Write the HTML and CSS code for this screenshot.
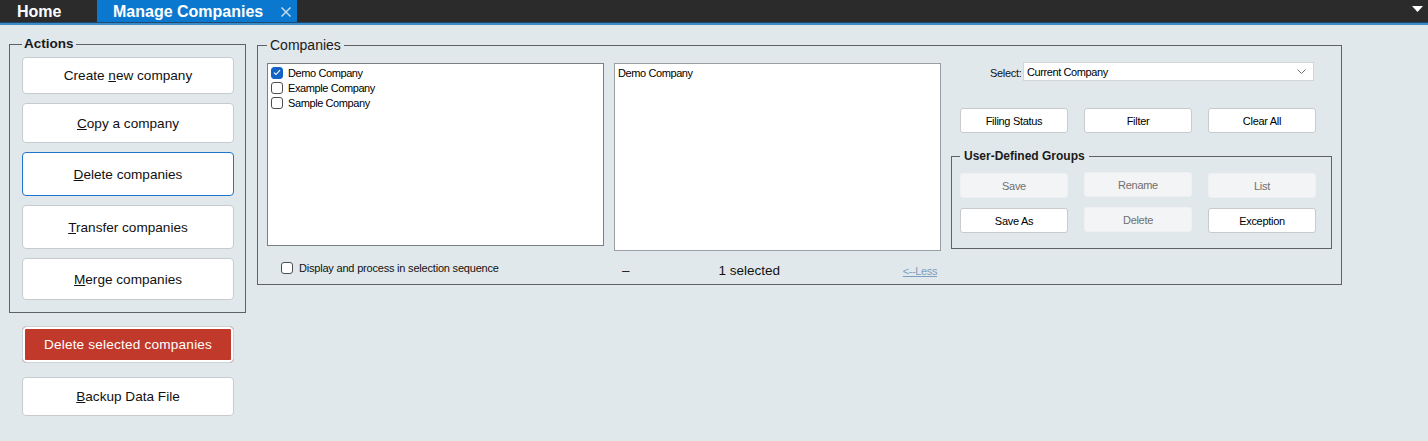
FILE: index.html
```html
<!DOCTYPE html>
<html lang="en">
<head>
<meta charset="utf-8">
<title>Manage Companies</title>
<link rel="stylesheet" href="styles.css">
</head>
<body>
<header class="tabbar">
  <div class="tab tab-home">Home</div>
  <div class="tab tab-active">Manage Companies
    <svg class="tab-close" width="12" height="12" viewBox="0 0 12 12"><path d="M1.5 1.5L10.5 10.5M10.5 1.5L1.5 10.5" stroke="#c4dbf1" stroke-width="1.5" fill="none"/></svg>
  </div>
  <div class="tab-spacer"></div>
  <svg class="tab-menu" width="11" height="6" viewBox="0 0 11 6"><path d="M0 0H11L5.5 6Z" fill="#ffffff"/></svg>
</header>

<main class="content">
  <div class="left-col">
    <fieldset class="group actions">
      <legend class="legend legend-bold">Actions</legend>
      <div class="action-list">
        <button class="btn action h37">Create <u>n</u>ew company</button>
        <button class="btn action h40"><u>C</u>opy a company</button>
        <button class="btn action h44 focused"><u>D</u>elete companies</button>
        <button class="btn action h44"><u>T</u>ransfer companies</button>
        <button class="btn action h42"><u>M</u>erge companies</button>
      </div>
    </fieldset>
    <button class="btn action danger">Delete selected companies</button>
    <button class="btn action backup"><u>B</u>ackup Data File</button>
  </div>

  <fieldset class="group companies">
    <legend class="legend legend-regular">Companies</legend>
    <div class="companies-body">
      <div class="col col-source">
        <div class="listbox list-source">
          <div class="list-item"><span class="check checked"><svg width="8" height="7" viewBox="0 0 8 7"><path d="M1 3.6L3 5.5L7 1.2" stroke="#fff" stroke-width="1.1" fill="none"/></svg></span>Demo Company</div>
          <div class="list-item"><span class="check"></span>Example Company</div>
          <div class="list-item"><span class="check"></span>Sample Company</div>
        </div>
        <label class="option-row"><span class="check"></span>Display and process in selection sequence</label>
      </div>

      <div class="col col-selected">
        <div class="listbox list-selected">
          <div class="list-item plain">Demo Company</div>
        </div>
        <div class="status-row">
          <span class="dash">–</span>
          <span class="count">1 selected</span>
          <a class="less-link">&lt;--Less</a>
        </div>
      </div>

      <div class="col col-tools">
        <div class="select-row">
          <span class="select-label">Select:</span>
          <div class="dropdown">
            <span>Current Company</span>
            <svg width="9" height="5" viewBox="0 0 9 5"><path d="M0.5 0.5L4.5 4.5L8.5 0.5" stroke="#6b6b6b" stroke-width="1" fill="none"/></svg>
          </div>
        </div>
        <div class="btn-grid tool-buttons">
          <button class="btn small">Filing Status</button>
          <button class="btn small">Filter</button>
          <button class="btn small">Clear All</button>
        </div>
        <fieldset class="group udg">
          <legend class="legend legend-small">User-Defined Groups</legend>
          <div class="btn-grid udg-grid">
            <button class="btn small disabled">Save</button>
            <button class="btn small disabled raised">Rename</button>
            <button class="btn small disabled">List</button>
            <button class="btn small">Save As</button>
            <button class="btn small disabled raised">Delete</button>
            <button class="btn small">Exception</button>
          </div>
        </fieldset>
      </div>
    </div>
  </fieldset>
</main>
</body>
</html>
```

FILE: styles.css
```css
* { box-sizing: border-box; }

html, body {
  margin: 0;
  padding: 0;
}

body {
  background: #e1e8eb;
  font-family: "Liberation Sans", Arial, sans-serif;
  color: #111;
  width: 1428px;
  height: 441px;
  overflow: hidden;
}

/* ---------- tab bar ---------- */
.tabbar {
  display: flex;
  align-items: stretch;
  height: 25px;
  background: #2b2b2b;
  border-bottom: 2px solid #3b8dc7;
  box-shadow: inset 0 -1px 0 #1d4a72;
}

.tab {
  height: 22px;
  line-height: 23px;
  font-size: 16px;
  font-weight: bold;
  color: #ffffff;
  white-space: nowrap;
}

.tab-home {
  width: 97px;
  padding-left: 17px;
}

.tab-active {
  width: 200px;
  padding-left: 16px;
  background: #0b78cf;
  display: flex;
  align-items: center;
}

.tab-close {
  margin-left: 17px;
  margin-top: 1px;
}

.tab-spacer { flex: 1; }

.tab-menu {
  align-self: center;
  margin-top: -6px;
  margin-right: 5px;
}

/* ---------- layout ---------- */
.content {
  display: flex;
  align-items: flex-start;
  padding: 11px 0 0 9px;
}

.left-col {
  display: flex;
  flex-direction: column;
  width: 237px;
}

.group {
  margin: 0;
  border: 1px solid #5d6266;
  min-width: 0;
}

.legend {
  line-height: 16px;
  padding: 0 2px;
  color: #1a1a1a;
}

.legend-bold {
  font-size: 13.5px;
  font-weight: bold;
}

.legend-regular {
  font-size: 14px;
  padding: 0 3px;
}

.legend-small {
  font-size: 12px;
  font-weight: bold;
  line-height: 14px;
  padding: 0 4px;
}

/* ---------- actions ---------- */
.actions {
  width: 237px;
  padding: 5px 10px 12px 12px;
}

.action-list {
  display: flex;
  flex-direction: column;
  gap: 9px;
}

.btn {
  font-family: "Liberation Sans", Arial, sans-serif;
  background: #ffffff;
  border: 1px solid #c8cbce;
  border-radius: 4px;
  color: #111;
  padding: 0;
  margin: 0;
  cursor: default;
}

.action {
  width: 212px;
  font-size: 13.6px;
}

.h37 { height: 37px; }
.h40 { height: 40px; }
.h42 { height: 42px; }
.h44 { height: 44px; }

.focused {
  border-color: #1f74cc;
}

.danger {
  margin-top: 13px;
  height: 37px;
  margin-left: 13px;
  background: #c0392b;
  color: #ffffff;
  border-color: #cfd3d6;
  box-shadow: inset 0 0 0 2px #ffffff;
  letter-spacing: 0.2px;
}

.backup {
  margin-top: 14px;
  margin-left: 13px;
  height: 39px;
}

/* ---------- companies ---------- */
.companies {
  width: 1085px;
  margin-left: 11px;
  margin-top: 1px;
  padding: 10px 9px 6px 9px;
}

.companies-body {
  display: flex;
  align-items: flex-start;
  gap: 10px;
}

.col {
  display: flex;
  flex-direction: column;
}

.listbox {
  background: #ffffff;
  border: 1px solid #7a7f84;
  padding: 1px 3px;
}

.list-source {
  width: 337px;
  height: 183px;
}

.list-selected {
  width: 327px;
  height: 188px;
  border-color: #9a9fa3;
  padding-top: 2px;
}

.list-item {
  display: flex;
  align-items: center;
  height: 15px;
  font-size: 11px;
  letter-spacing: -0.4px;
  color: #000;
  white-space: nowrap;
}

.list-item.plain {
  height: 13px;
}

.check {
  flex: none;
  width: 12px;
  height: 12px;
  border: 1px solid #4e4e4e;
  border-radius: 3px;
  background: #ffffff;
  margin-right: 5px;
  display: flex;
  align-items: center;
  justify-content: center;
}

.check.checked {
  background: #1463c4;
  border-color: #1463c4;
}

.option-row {
  display: flex;
  align-items: center;
  height: 14px;
  margin-top: 15px;
  margin-left: 14px;
  font-size: 11px;
  letter-spacing: -0.2px;
  color: #111;
}

.option-row .check {
  margin-right: 6px;
}

.status-row {
  display: flex;
  align-items: center;
  height: 16px;
  margin-top: 11px;
  padding-right: 4px;
  font-size: 13.5px;
}

.dash {
  margin-left: 8px;
}

.count {
  margin-left: 89px;
}

.less-link {
  margin-left: auto;
  font-size: 11px;
  letter-spacing: -0.4px;
  color: #7d9fc0;
  text-decoration: underline;
  margin-top: 1px;
}

/* ---------- tools ---------- */
.col-tools {
  width: 381px;
}

.select-row {
  display: flex;
  align-items: flex-end;
  margin-top: -1px;
  padding-left: 39px;
}

.select-label {
  width: 33px;
  font-size: 11px;
  letter-spacing: -0.3px;
  padding-bottom: 2px;
  color: #111;
}

.dropdown {
  width: 291px;
  height: 19px;
  background: #ffffff;
  border: 1px solid #d3d6d9;
  display: flex;
  align-items: center;
  justify-content: space-between;
  padding: 0 7px 0 3px;
  font-size: 11px;
  letter-spacing: -0.4px;
  color: #000;
}

.btn-grid {
  display: grid;
  grid-template-columns: repeat(3, 108px);
  column-gap: 16px;
}

.tool-buttons {
  margin-top: 27px;
  padding-left: 9px;
}

.small {
  height: 25px;
  font-size: 11px;
  letter-spacing: -0.3px;
  border-radius: 3px;
  color: #000;
}

.small.disabled {
  background: #f3f4f5;
  border-color: #eef0f1;
  color: #6f6f6f;
}

.small.raised {
  margin-top: -1px;
}

.udg {
  margin-top: 16px;
  width: 381px;
  padding: 10px 8px 15px 8px;
}

.udg-grid {
  row-gap: 10px;
}
```
